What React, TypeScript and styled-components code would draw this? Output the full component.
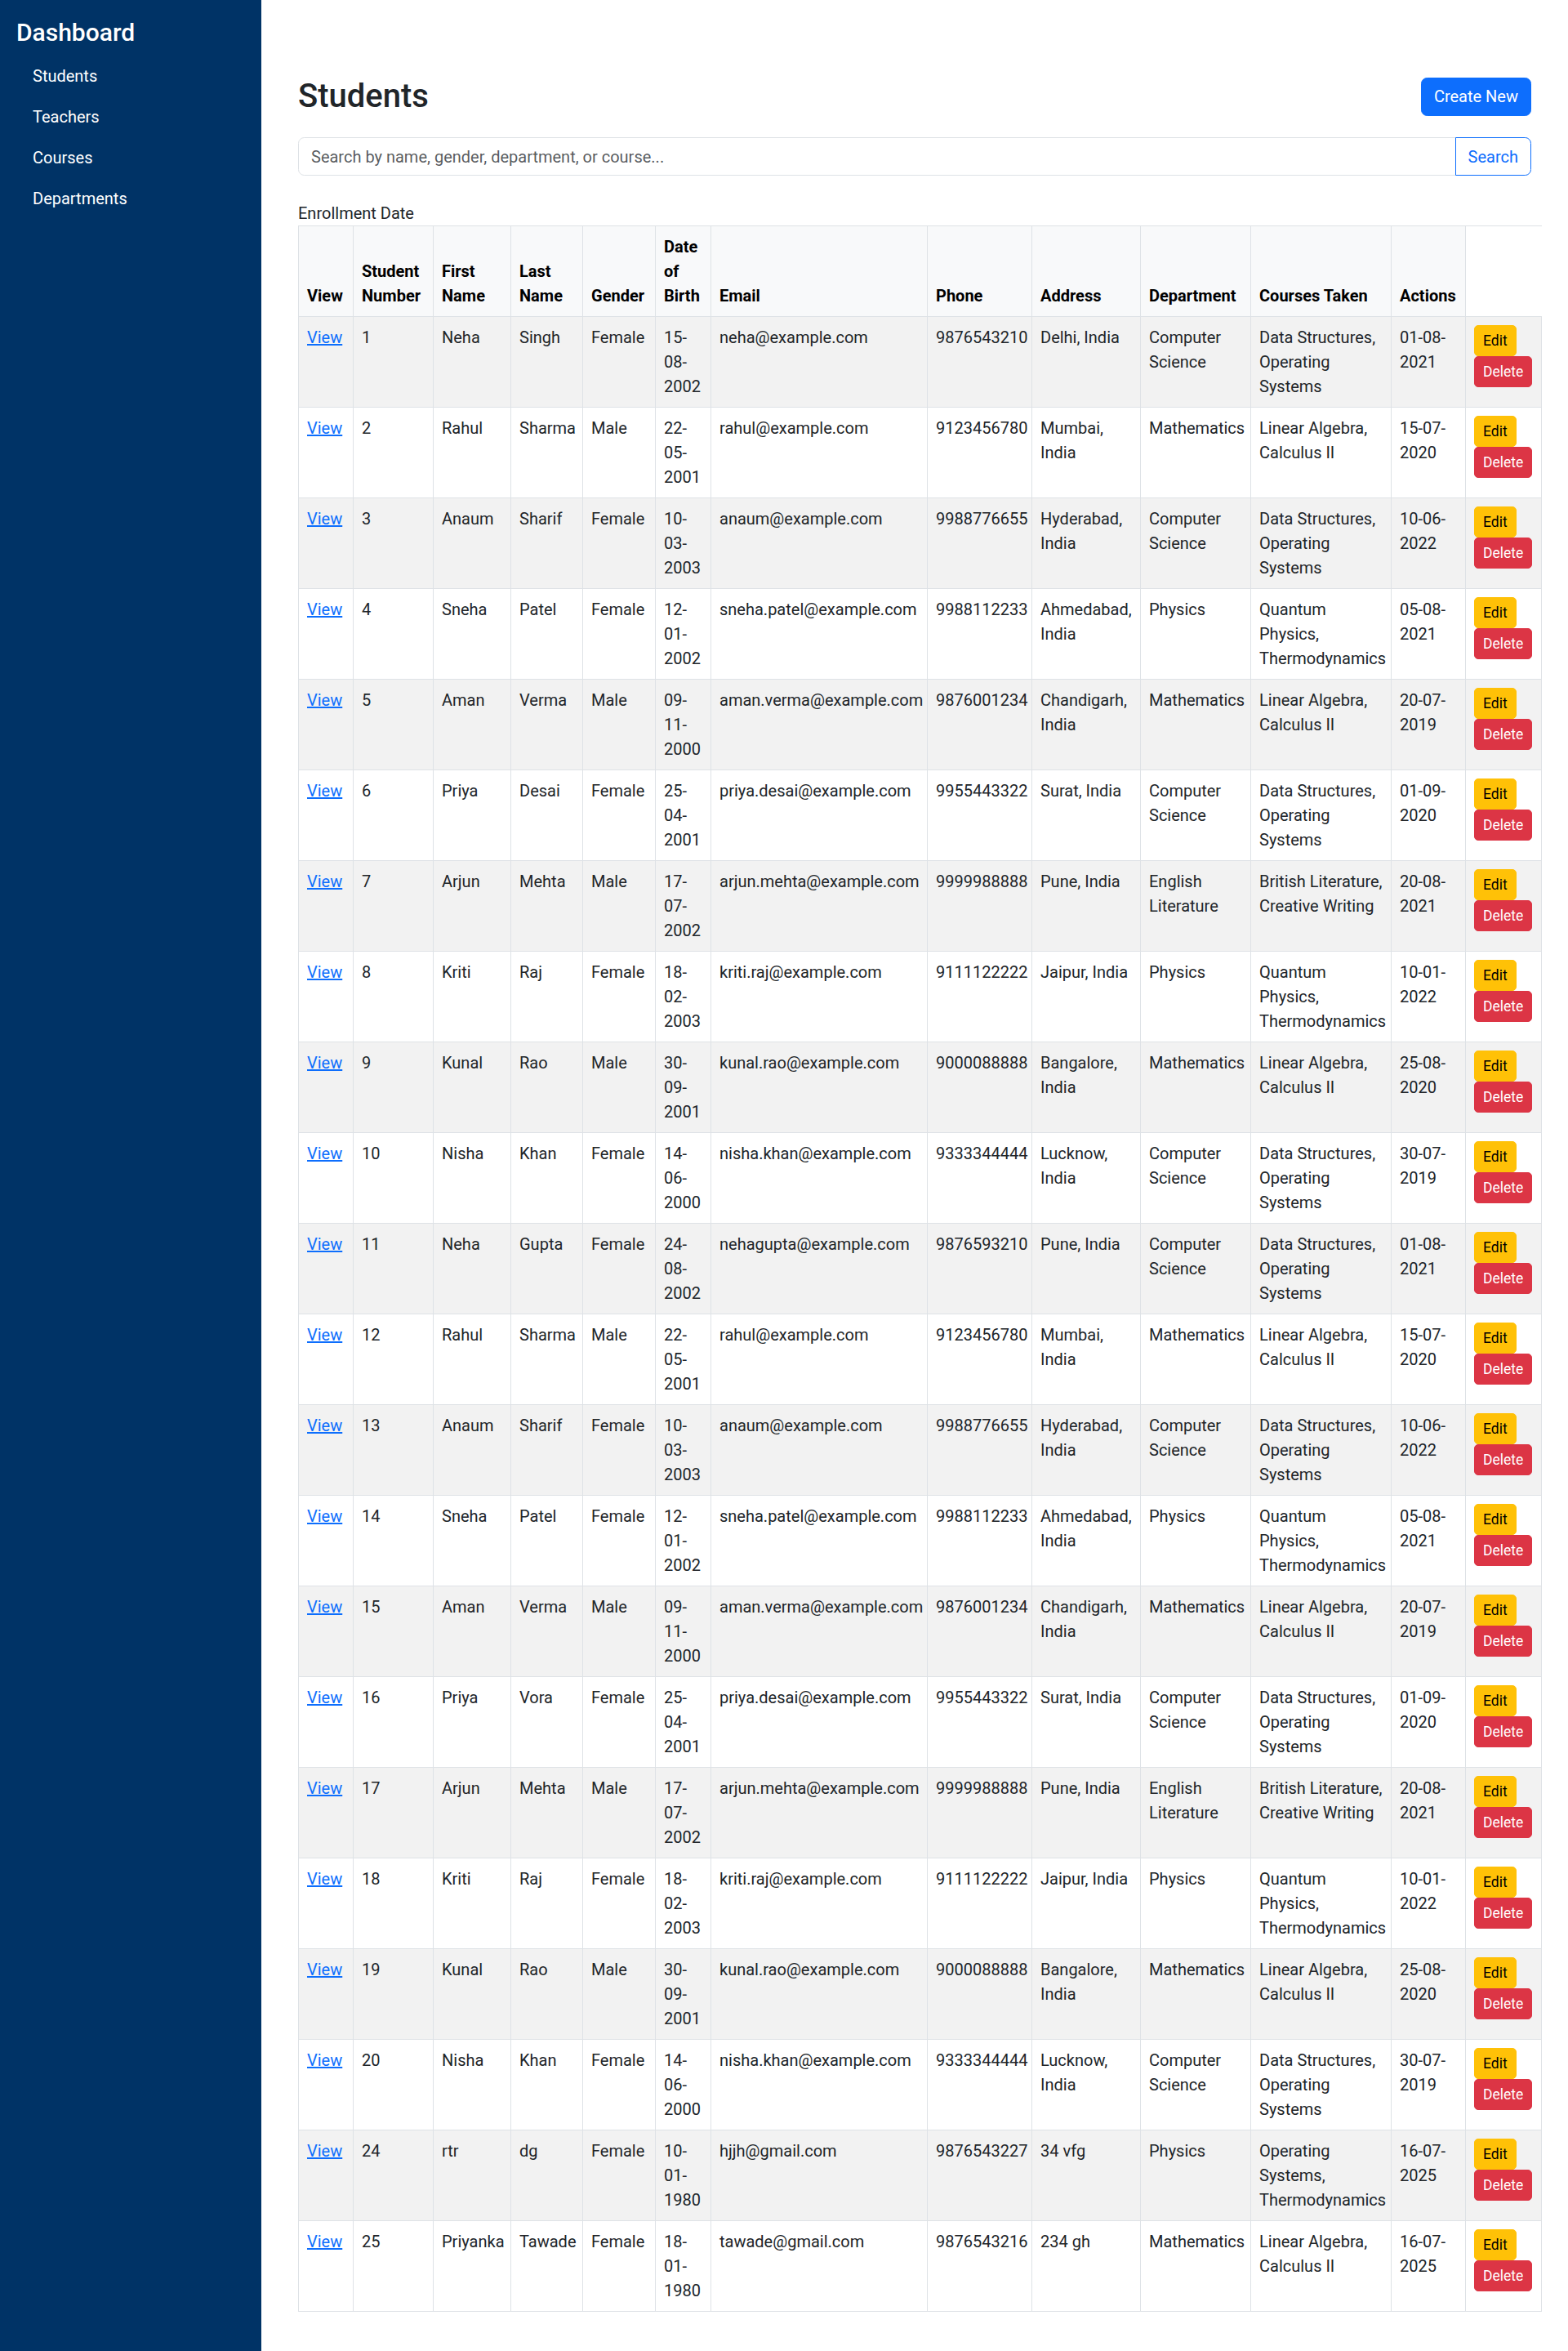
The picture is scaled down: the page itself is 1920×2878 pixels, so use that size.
import React from "react";
import styled, { createGlobalStyle } from "styled-components";

const GlobalStyle = createGlobalStyle`
  * { box-sizing: border-box; }
  html, body { margin: 0; padding: 0; }
  body {
    font-family: Roboto, "Liberation Sans", Arial, sans-serif;
    font-size: 20px;
    line-height: 1.5;
    color: #212529;
    background: #ffffff;
  }
`;

const Layout = styled.div`
  display: flex;
  min-height: 100vh;
`;

const Sidebar = styled.aside`
  width: 320px;
  flex-shrink: 0;
  background: #003366;
  color: #ffffff;
  padding: 22px 20px 20px;
`;

const Brand = styled.h4`
  margin: 0 0 10px;
  font-size: 30px;
  font-weight: 500;
  line-height: 1.2;
`;

const NavList = styled.ul`
  list-style: none;
  margin: 0;
  padding: 0;
  display: flex;
  flex-direction: column;
`;

const NavLink = styled.a`
  display: block;
  padding: 10px 20px;
  color: #ffffff;
  text-decoration: none;
  font-size: 20px;
  line-height: 30px;
`;

const Main = styled.main`
  flex: 1;
  min-width: 0;
  padding: 94px 45px 40px;
`;

const HeaderRow = styled.div`
  display: flex;
  justify-content: space-between;
  align-items: center;
  margin-bottom: 26px;
`;

const Title = styled.h2`
  margin: 0;
  font-size: 40px;
  font-weight: 500;
  line-height: 1.2;
  color: #212529;
`;

const PrimaryButton = styled.button`
  font-family: inherit;
  font-size: 20px;
  line-height: 30px;
  padding: 7.5px 15px;
  color: #ffffff;
  background: #0d6efd;
  border: 1px solid #0d6efd;
  border-radius: 7.5px;
  cursor: pointer;
`;

const SearchGroup = styled.form`
  display: flex;
  margin-bottom: 31px;
`;

const SearchInput = styled.input`
  flex: 1;
  min-width: 0;
  font-family: inherit;
  font-size: 20px;
  line-height: 30px;
  padding: 7.5px 15px;
  color: #212529;
  border: 1px solid #dee2e6;
  border-radius: 7.5px 0 0 7.5px;
  outline: none;
  &::placeholder {
    color: rgba(33, 37, 41, 0.75);
  }
`;

const SearchButton = styled.button`
  font-family: inherit;
  font-size: 20px;
  line-height: 30px;
  padding: 7.5px 15px;
  margin-left: -1px;
  color: #0d6efd;
  background: #ffffff;
  border: 1px solid #0d6efd;
  border-radius: 0 7.5px 7.5px 0;
  cursor: pointer;
`;

const FloatingLabel = styled.div`
  line-height: 30px;
  color: #212529;
`;

const Table = styled.table`
  border-collapse: collapse;
  table-layout: fixed;
  width: 1522px;
  color: #212529;
`;

const HeadCell = styled.th<{ $blank?: boolean }>`
  padding: 10px;
  text-align: left;
  vertical-align: bottom;
  font-weight: 700;
  color: #000000;
  background: ${(p) => (p.$blank ? "#ffffff" : "#f8f9fa")};
  border: 1px solid #dee2e6;
  ${(p) => (p.$blank ? "border-right-width: 0;" : "")}
`;

const Row = styled.tr<{ $striped: boolean }>`
  background: ${(p) => (p.$striped ? "#f2f2f2" : "#ffffff")};
`;

const Cell = styled.td`
  padding: 10px;
  vertical-align: top;
  border: 1px solid #dee2e6;
  line-height: 30px;
`;

const ViewLink = styled.a`
  color: #0d6efd;
  text-decoration: underline;
`;

const ActionStack = styled.div`
  display: flex;
  flex-direction: column;
  align-items: flex-start;
`;

const SmallButton = styled.button<{ $variant: "warning" | "danger" }>`
  font-family: inherit;
  font-size: 17.5px;
  line-height: 26px;
  padding: 5px 10px;
  border-radius: 5px;
  cursor: pointer;
  border: 1px solid ${(p) => (p.$variant === "warning" ? "#ffc107" : "#dc3545")};
  background: ${(p) => (p.$variant === "warning" ? "#ffc107" : "#dc3545")};
  color: ${(p) => (p.$variant === "warning" ? "#000000" : "#ffffff")};
`;

type Student = {
  id: number;
  first: string;
  last: string;
  gender: string;
  dob: string;
  email: string;
  phone: string;
  address: string;
  dept: string;
  courses: string;
  enrolled: string;
};

const DS = "Data Structures, Operating Systems";
const LA = "Linear Algebra, Calculus II";
const QP = "Quantum Physics, Thermodynamics";
const BL = "British Literature, Creative Writing";

const students: Student[] = [
  { id: 1, first: "Neha", last: "Singh", gender: "Female", dob: "15-08-2002", email: "neha@example.com", phone: "9876543210", address: "Delhi, India", dept: "Computer Science", courses: DS, enrolled: "01-08-2021" },
  { id: 2, first: "Rahul", last: "Sharma", gender: "Male", dob: "22-05-2001", email: "rahul@example.com", phone: "9123456780", address: "Mumbai, India", dept: "Mathematics", courses: LA, enrolled: "15-07-2020" },
  { id: 3, first: "Anaum", last: "Sharif", gender: "Female", dob: "10-03-2003", email: "anaum@example.com", phone: "9988776655", address: "Hyderabad, India", dept: "Computer Science", courses: DS, enrolled: "10-06-2022" },
  { id: 4, first: "Sneha", last: "Patel", gender: "Female", dob: "12-01-2002", email: "sneha.patel@example.com", phone: "9988112233", address: "Ahmedabad, India", dept: "Physics", courses: QP, enrolled: "05-08-2021" },
  { id: 5, first: "Aman", last: "Verma", gender: "Male", dob: "09-11-2000", email: "aman.verma@example.com", phone: "9876001234", address: "Chandigarh, India", dept: "Mathematics", courses: LA, enrolled: "20-07-2019" },
  { id: 6, first: "Priya", last: "Desai", gender: "Female", dob: "25-04-2001", email: "priya.desai@example.com", phone: "9955443322", address: "Surat, India", dept: "Computer Science", courses: DS, enrolled: "01-09-2020" },
  { id: 7, first: "Arjun", last: "Mehta", gender: "Male", dob: "17-07-2002", email: "arjun.mehta@example.com", phone: "9999988888", address: "Pune, India", dept: "English Literature", courses: BL, enrolled: "20-08-2021" },
  { id: 8, first: "Kriti", last: "Raj", gender: "Female", dob: "18-02-2003", email: "kriti.raj@example.com", phone: "9111122222", address: "Jaipur, India", dept: "Physics", courses: QP, enrolled: "10-01-2022" },
  { id: 9, first: "Kunal", last: "Rao", gender: "Male", dob: "30-09-2001", email: "kunal.rao@example.com", phone: "9000088888", address: "Bangalore, India", dept: "Mathematics", courses: LA, enrolled: "25-08-2020" },
  { id: 10, first: "Nisha", last: "Khan", gender: "Female", dob: "14-06-2000", email: "nisha.khan@example.com", phone: "9333344444", address: "Lucknow, India", dept: "Computer Science", courses: DS, enrolled: "30-07-2019" },
  { id: 11, first: "Neha", last: "Gupta", gender: "Female", dob: "24-08-2002", email: "nehagupta@example.com", phone: "9876593210", address: "Pune, India", dept: "Computer Science", courses: DS, enrolled: "01-08-2021" },
  { id: 12, first: "Rahul", last: "Sharma", gender: "Male", dob: "22-05-2001", email: "rahul@example.com", phone: "9123456780", address: "Mumbai, India", dept: "Mathematics", courses: LA, enrolled: "15-07-2020" },
  { id: 13, first: "Anaum", last: "Sharif", gender: "Female", dob: "10-03-2003", email: "anaum@example.com", phone: "9988776655", address: "Hyderabad, India", dept: "Computer Science", courses: DS, enrolled: "10-06-2022" },
  { id: 14, first: "Sneha", last: "Patel", gender: "Female", dob: "12-01-2002", email: "sneha.patel@example.com", phone: "9988112233", address: "Ahmedabad, India", dept: "Physics", courses: QP, enrolled: "05-08-2021" },
  { id: 15, first: "Aman", last: "Verma", gender: "Male", dob: "09-11-2000", email: "aman.verma@example.com", phone: "9876001234", address: "Chandigarh, India", dept: "Mathematics", courses: LA, enrolled: "20-07-2019" },
  { id: 16, first: "Priya", last: "Vora", gender: "Female", dob: "25-04-2001", email: "priya.desai@example.com", phone: "9955443322", address: "Surat, India", dept: "Computer Science", courses: DS, enrolled: "01-09-2020" },
  { id: 17, first: "Arjun", last: "Mehta", gender: "Male", dob: "17-07-2002", email: "arjun.mehta@example.com", phone: "9999988888", address: "Pune, India", dept: "English Literature", courses: BL, enrolled: "20-08-2021" },
  { id: 18, first: "Kriti", last: "Raj", gender: "Female", dob: "18-02-2003", email: "kriti.raj@example.com", phone: "9111122222", address: "Jaipur, India", dept: "Physics", courses: QP, enrolled: "10-01-2022" },
  { id: 19, first: "Kunal", last: "Rao", gender: "Male", dob: "30-09-2001", email: "kunal.rao@example.com", phone: "9000088888", address: "Bangalore, India", dept: "Mathematics", courses: LA, enrolled: "25-08-2020" },
  { id: 20, first: "Nisha", last: "Khan", gender: "Female", dob: "14-06-2000", email: "nisha.khan@example.com", phone: "9333344444", address: "Lucknow, India", dept: "Computer Science", courses: DS, enrolled: "30-07-2019" },
  { id: 24, first: "rtr", last: "dg", gender: "Female", dob: "10-01-1980", email: "hjjh@gmail.com", phone: "9876543227", address: "34 vfg", dept: "Physics", courses: "Operating Systems, Thermodynamics", enrolled: "16-07-2025" },
  { id: 25, first: "Priyanka", last: "Tawade", gender: "Female", dob: "18-01-1980", email: "tawade@gmail.com", phone: "9876543216", address: "234 gh", dept: "Mathematics", courses: LA, enrolled: "16-07-2025" },
];

const columnWidths = [67, 98, 95, 88, 89, 68, 265, 128, 133, 135, 172, 91, 93];

const headers = [
  "View",
  "Student Number",
  "First Name",
  "Last Name",
  "Gender",
  "Date of Birth",
  "Email",
  "Phone",
  "Address",
  "Department",
  "Courses Taken",
  "Actions",
];

const DateText = ({ value }: { value: string }) => {
  const parts = value.split("-");
  return (
    <>
      {parts.map((part, i) => (
        <React.Fragment key={i}>
          {part}
          {i < parts.length - 1 ? "-" : ""}
          {i < parts.length - 1 ? <wbr /> : null}
        </React.Fragment>
      ))}
    </>
  );
};

export default function App() {
  return (
    <>
      <GlobalStyle />
      <Layout>
        <Sidebar>
          <Brand>Dashboard</Brand>
          <NavList>
            {["Students", "Teachers", "Courses", "Departments"].map((item) => (
              <li key={item}>
                <NavLink href="#">{item}</NavLink>
              </li>
            ))}
          </NavList>
        </Sidebar>
        <Main>
          <HeaderRow>
            <Title>Students</Title>
            <PrimaryButton type="button">Create New</PrimaryButton>
          </HeaderRow>
          <SearchGroup onSubmit={(e) => e.preventDefault()}>
            <SearchInput
              type="text"
              placeholder="Search by name, gender, department, or course..."
            />
            <SearchButton type="submit">Search</SearchButton>
          </SearchGroup>
          <FloatingLabel>Enrollment Date</FloatingLabel>
          <Table>
            <colgroup>
              {columnWidths.map((w, i) => (
                <col key={i} style={{ width: w }} />
              ))}
            </colgroup>
            <thead>
              <tr>
                {headers.map((h) => (
                  <HeadCell key={h}>{h}</HeadCell>
                ))}
                <HeadCell $blank />
              </tr>
            </thead>
            <tbody>
              {students.map((s, i) => (
                <Row key={s.id} $striped={i % 2 === 0}>
                  <Cell>
                    <ViewLink href="#">View</ViewLink>
                  </Cell>
                  <Cell>{s.id}</Cell>
                  <Cell>{s.first}</Cell>
                  <Cell>{s.last}</Cell>
                  <Cell>{s.gender}</Cell>
                  <Cell>
                    <DateText value={s.dob} />
                  </Cell>
                  <Cell>{s.email}</Cell>
                  <Cell>{s.phone}</Cell>
                  <Cell>{s.address}</Cell>
                  <Cell>{s.dept}</Cell>
                  <Cell>{s.courses}</Cell>
                  <Cell>
                    <DateText value={s.enrolled} />
                  </Cell>
                  <Cell>
                    <ActionStack>
                      <SmallButton type="button" $variant="warning">Edit</SmallButton>
                      <SmallButton type="button" $variant="danger">Delete</SmallButton>
                    </ActionStack>
                  </Cell>
                </Row>
              ))}
            </tbody>
          </Table>
        </Main>
      </Layout>
    </>
  );
}
